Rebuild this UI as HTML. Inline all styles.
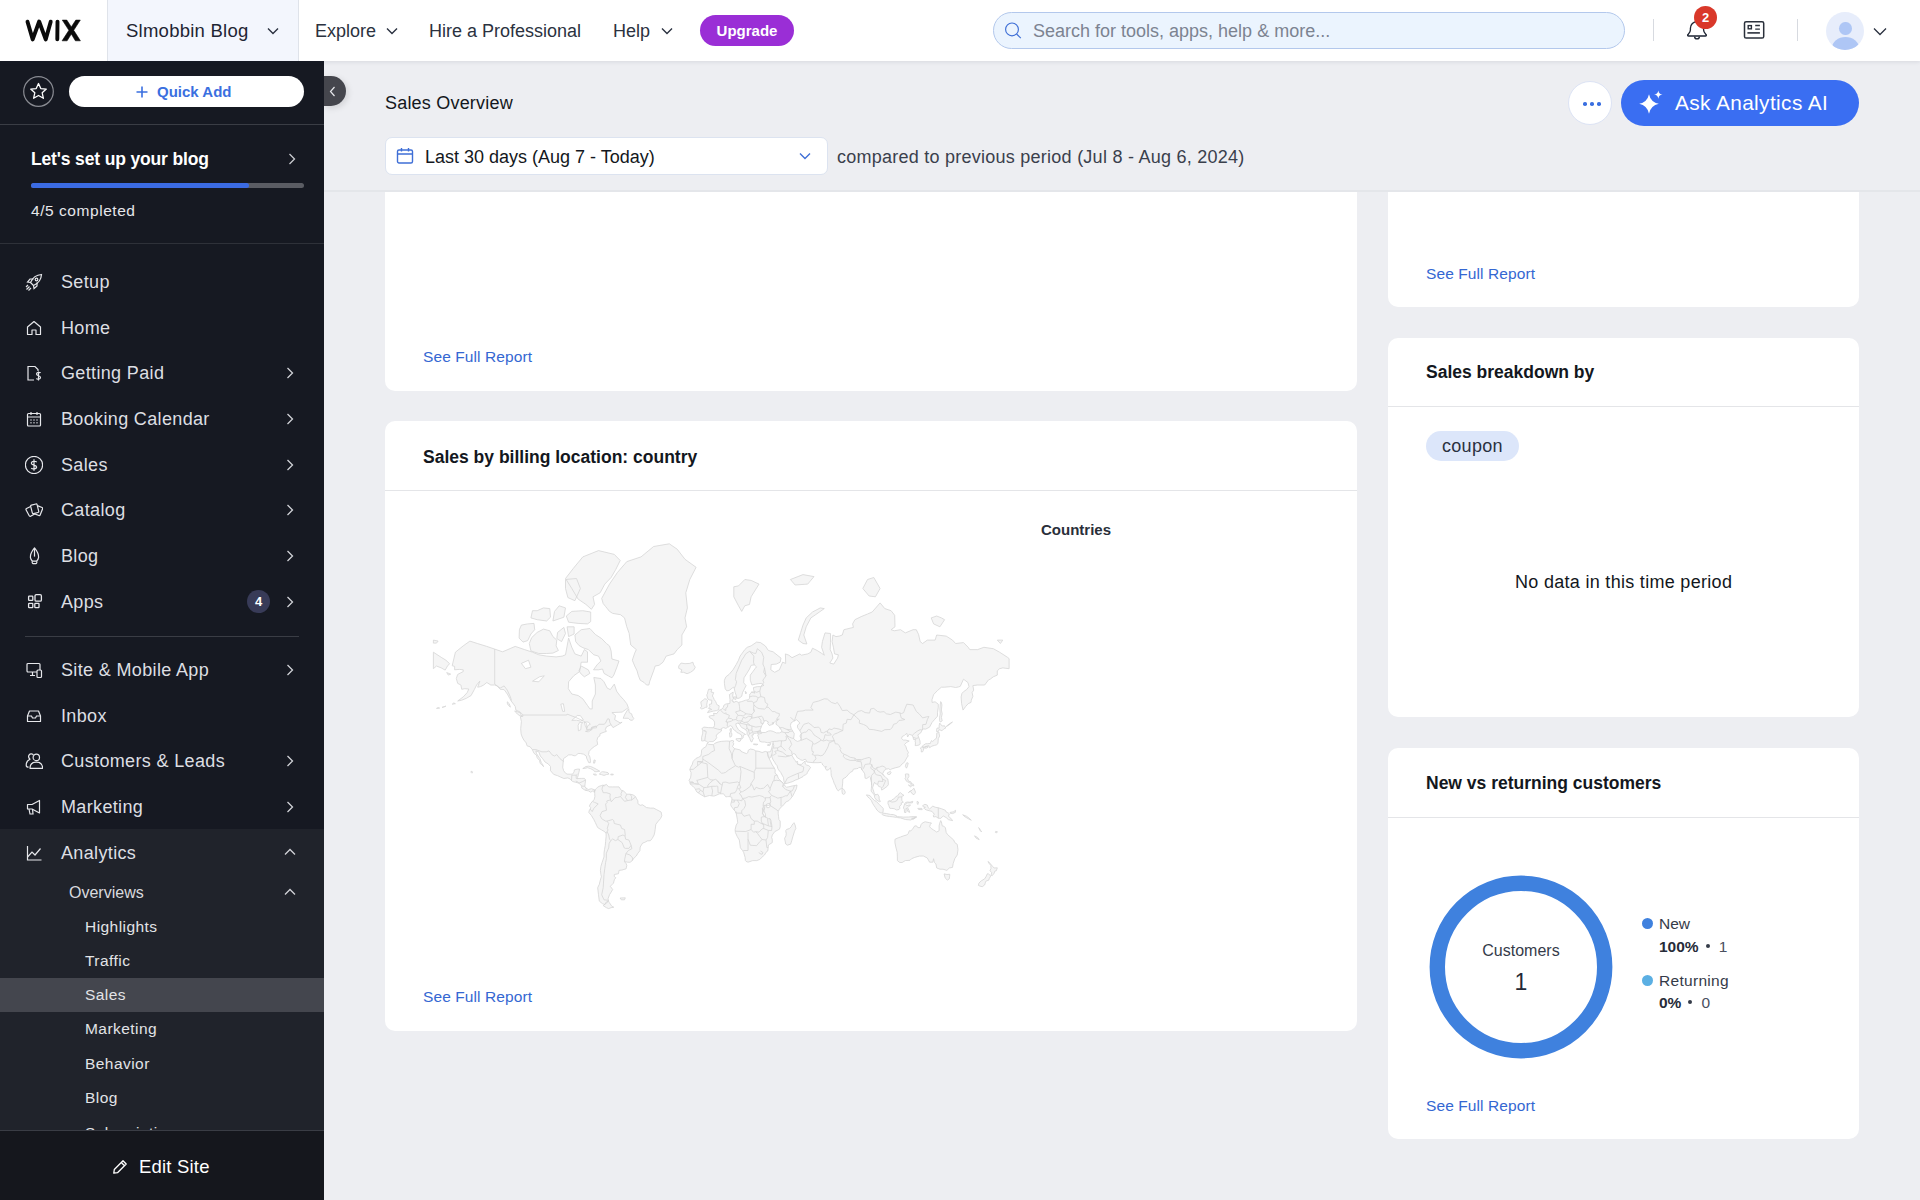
<!DOCTYPE html>
<html><head><meta charset="utf-8">
<style>
*{box-sizing:border-box;margin:0;padding:0}
html,body{width:1920px;height:1200px;overflow:hidden;background:#EDEEF2;font-family:"Liberation Sans",sans-serif;color:#131720}
.abs{position:absolute}
.t{position:absolute;white-space:nowrap;line-height:1}
/* topbar */
#top{position:absolute;left:0;top:0;width:1920px;height:61px;background:#fff;box-shadow:0 1px 4px rgba(20,30,60,.10);z-index:5}
#site{position:absolute;left:107px;top:0;width:192px;height:61px;background:#F3F6FD;border-left:1px solid #DFE3EA;border-right:1px solid #DFE3EA}
.nav{color:#2B3240;font-size:18px}
#upg{position:absolute;left:700px;top:15px;width:94px;height:31px;border-radius:16px;background:#9A2ED6;color:#fff;font-weight:700;font-size:15px;text-align:center;line-height:31px}
#search{position:absolute;left:993px;top:12px;width:632px;height:37px;border-radius:19px;background:#EBF4FE;border:1px solid #B3C8EC}
/* sidebar */
#side{position:absolute;left:0;top:61px;width:324px;height:1139px;background:#161922;z-index:3}
.si{position:absolute;left:61px;font-size:18px;color:#DDDFE3;letter-spacing:.35px}
.chev{position:absolute;left:286px;width:8px;height:12px}
/* main */
.card{position:absolute;background:#fff;border-radius:10px}
.link{color:#3467D2;font-size:15.5px;letter-spacing:.1px}
.ctitle{font-weight:700;font-size:17.5px;color:#131720}
.div{position:absolute;height:1px;background:#E4E5E8}
</style></head>
<body>
<!-- TOP BAR -->
<div id="top">
  <svg class="abs" style="left:0;top:0" width="90" height="61" viewBox="0 0 90 61">
    <path d="M27.5 21.7 L32.7 39.4 L39.15 21.5 L45.7 39.4 L50.7 21.7" stroke="#0B0B0B" stroke-width="3.9" fill="none" stroke-linejoin="round" stroke-linecap="round"/>
    <path d="M57.5 21.6 L57.3 39.2" stroke="#0B0B0B" stroke-width="3.9" stroke-linecap="round"/>
    <path d="M62.3 20.1 L66.8 20.1 L71.3 26.9 L75.8 20.1 L80.3 20.1 L73.7 30.3 L80.4 40.8 L75.4 40.8 L71.3 34 L67.1 40.8 L62.1 40.8 L68.9 30.3 Z" fill="#0B0B0B" stroke="#0B0B0B" stroke-width="0.6" stroke-linejoin="round"/>
  </svg>
  <div id="site">
    <div class="t nav" style="left:18px;top:22px;font-size:18.5px;letter-spacing:.25px;color:#1E2533">Slmobbin Blog</div>
    <svg class="abs" style="left:159px;top:27px" width="12" height="8" viewBox="0 0 12 8"><path d="M1 1.5 L6 6.5 L11 1.5" stroke="#2B3240" stroke-width="1.4" fill="none"/></svg>
  </div>
  <div class="t nav" style="left:315px;top:22px">Explore</div>
  <svg class="abs" style="left:386px;top:27px" width="12" height="8" viewBox="0 0 12 8"><path d="M1 1.5 L6 6.5 L11 1.5" stroke="#2B3240" stroke-width="1.4" fill="none"/></svg>
  <div class="t nav" style="left:429px;top:22px">Hire a Professional</div>
  <div class="t nav" style="left:613px;top:22px">Help</div>
  <svg class="abs" style="left:661px;top:27px" width="12" height="8" viewBox="0 0 12 8"><path d="M1 1.5 L6 6.5 L11 1.5" stroke="#2B3240" stroke-width="1.4" fill="none"/></svg>
  <div id="upg">Upgrade</div>
  <div id="search">
    <svg class="abs" style="left:10px;top:9px" width="18" height="18" viewBox="0 0 18 18"><circle cx="8" cy="7.4" r="6.4" stroke="#3F6FD6" stroke-width="1.15" fill="none"/><path d="M12.6 12 L16.8 16.2" stroke="#3F6FD6" stroke-width="1.15"/></svg>
    <div class="t" style="left:39px;top:9px;font-size:18px;color:#7C8391">Search for tools, apps, help &amp; more...</div>
  </div>
  <div class="abs" style="left:1653px;top:19px;width:1px;height:22px;background:#D7DAE0"></div>
  <svg class="abs" style="left:1686px;top:19px" width="23" height="23" viewBox="0 0 23 23"><path d="M2.6 17 H19.4 C20.4 17 20.7 16.2 20 15.5 C18.8 14.3 17.6 13.3 17.6 11 L17.6 9.2 C17.6 5.3 14.6 2.6 11 2.6 C7.4 2.6 4.4 5.3 4.4 9.2 L4.4 11 C4.4 13.3 3.2 14.3 2 15.5 C1.3 16.2 1.6 17 2.6 17 Z" stroke="#1E2533" stroke-width="1.35" fill="none" stroke-linejoin="round"/><path d="M8.6 17.6 C8.8 20.6 13.2 20.6 13.4 17.6" stroke="#1E2533" stroke-width="1.35" fill="none"/></svg>
  <div class="abs" style="left:1694px;top:6px;width:23px;height:23px;border-radius:50%;background:#D9382A;color:#fff;font-size:13px;font-weight:700;text-align:center;line-height:23px">2</div>
  <svg class="abs" style="left:1743px;top:20px" width="22" height="20" viewBox="0 0 22 20"><rect x="1.5" y="1.7" width="19.2" height="16.4" rx="1.6" stroke="#2A303B" stroke-width="1.5" fill="none"/><rect x="5.2" y="5.6" width="3.2" height="3.2" stroke="#2A303B" stroke-width="1.4" fill="none"/><path d="M12.2 5.5 H16.9 M12.2 9.2 H16.9" stroke="#2A303B" stroke-width="1.3"/><path d="M4.4 12.9 H16.9" stroke="#2A303B" stroke-width="1.6"/></svg>
  <div class="abs" style="left:1797px;top:19px;width:1px;height:22px;background:#D7DAE0"></div>
  <div class="abs" style="left:1826px;top:12px;width:38px;height:38px;border-radius:50%;background:#E7EDFB;overflow:hidden">
    <div class="abs" style="left:13px;top:9.5px;width:12.5px;height:13.5px;border-radius:50%;background:#AEC6F5"></div>
    <div class="abs" style="left:5.5px;top:25px;width:27px;height:22px;border-radius:50%;background:#AEC6F5"></div>
  </div>
  <svg class="abs" style="left:1873px;top:27px" width="14" height="9" viewBox="0 0 14 9"><path d="M1 1.5 L7 7.5 L13 1.5" stroke="#2B3240" stroke-width="1.3" fill="none"/></svg>
</div>

<!-- SIDEBAR -->
<div id="side">
<svg class="abs" style="left:23px;top:15px" width="31" height="31" viewBox="0 0 31 31"><circle cx="15.5" cy="15.5" r="14.8" stroke="#8A8C93" stroke-width="1.2" fill="none"/><path d="M15.5 7.5 L17.8 12.6 L23.3 13.1 L19.2 16.8 L20.4 22.3 L15.5 19.5 L10.6 22.3 L11.8 16.8 L7.7 13.1 L13.2 12.6 Z" stroke="#fff" stroke-width="1.3" fill="none" stroke-linejoin="round"/></svg>
<div class="abs" style="left:69px;top:15px;width:235px;height:31px;border-radius:16px;background:#fff"></div>
<svg class="abs" style="left:136px;top:25px" width="12" height="12" viewBox="0 0 12 12"><path d="M6 0.5 V11.5 M0.5 6 H11.5" stroke="#3A6FE0" stroke-width="1.6"/></svg>
<div class="t" style="left:157px;top:23.3px;font-size:15px;font-weight:700;color:#3A6FE0">Quick Add</div>
<div class="abs" style="left:0;top:63px;width:324px;height:1px;background:#3A3D45"></div>
<div class="t" style="left:31px;top:90.0px;font-size:17.5px;font-weight:700;color:#fff;letter-spacing:-.15px">Let's set up your blog</div>
<svg class="abs" style="left:288px;top:92px" width="8" height="12" viewBox="0 0 8 12"><path d="M1.5 1 L6.5 6 L1.5 11" stroke="#C9CBD0" stroke-width="1.3" fill="none"/></svg>
<div class="abs" style="left:31px;top:122px;width:273px;height:5px;border-radius:3px;background:#5A5C63"><div style="width:218px;height:5px;border-radius:3px;background:#3B6BE3"></div></div>
<div class="t" style="left:31px;top:141.9px;font-size:15.5px;color:#E6E7EB;letter-spacing:.55px">4/5 completed</div>
<div class="abs" style="left:0;top:182px;width:324px;height:1px;background:#2E3139"></div>
<svg class="abs" style="left:25px;top:212.0px" width="18" height="18" viewBox="0 0 18 18" fill="none" stroke="#E6E7EB" stroke-width="1.2"><path d="M16.5 1.5 C11 1.8 7.5 5 5.5 9.5 L8.5 12.5 C13 10.5 16.2 7 16.5 1.5 Z" /><circle cx="11.5" cy="6.5" r="1.3"/><path d="M5.5 9.5 L2.5 9 L5 6 L8.5 6"/><path d="M8.5 12.5 L9 15.5 L12 13 L12 9.5"/><path d="M4.5 13.5 L1.5 16.5 M6 15 L3.5 17.5 M3 12 L1 14"/></svg>
<div class="t si" style="top:212.3px">Setup</div>
<svg class="abs" style="left:25px;top:258.0px" width="18" height="18" viewBox="0 0 18 18" fill="none" stroke="#E6E7EB" stroke-width="1.2"><path d="M2.5 8 L9 2.5 L15.5 8 L15.5 15.5 L11 15.5 L11 11 L7 11 L7 15.5 L2.5 15.5 Z" stroke-linejoin="round"/></svg>
<div class="t si" style="top:258.3px">Home</div>
<svg class="abs" style="left:25px;top:303.0px" width="18" height="18" viewBox="0 0 18 18" fill="none" stroke="#E6E7EB" stroke-width="1.2"><path d="M9 16 L3 16 L3 2.5 L10 2.5 L13 5.5 L13 7"/><path d="M15.5 9 C15 8 11.5 8 11.5 10 C11.5 12 15.5 11.5 15.5 13.5 C15.5 15.5 12 15.5 11.3 14.5 M13.5 7.5 L13.5 16.5"/></svg>
<div class="t si" style="top:303.3px">Getting Paid</div>
<svg class="chev" style="top:306.0px" viewBox="0 0 8 12"><path d="M1.5 1 L6.5 6 L1.5 11" stroke="#D0D2D7" stroke-width="1.3" fill="none"/></svg>
<svg class="abs" style="left:25px;top:349.0px" width="18" height="18" viewBox="0 0 18 18" fill="none" stroke="#E6E7EB" stroke-width="1.2"><rect x="2.5" y="3.5" width="13" height="12.5" rx="1"/><path d="M2.5 7 H15.5 M6 2 V5 M12 2 V5"/><path d="M5.5 10 h1 M8.5 10 h1 M11.5 10 h1 M5.5 12.8 h1 M8.5 12.8 h1 M11.5 12.8 h1" stroke-width="1.5"/></svg>
<div class="t si" style="top:349.3px">Booking Calendar</div>
<svg class="chev" style="top:352.0px" viewBox="0 0 8 12"><path d="M1.5 1 L6.5 6 L1.5 11" stroke="#D0D2D7" stroke-width="1.3" fill="none"/></svg>
<svg class="abs" style="left:25px;top:395.0px" width="18" height="18" viewBox="0 0 18 18" fill="none" stroke="#E6E7EB" stroke-width="1.2"><circle cx="9" cy="9" r="8.6"/><path d="M11.6 6.2 C11 4.8 6.4 4.8 6.4 7.2 C6.4 9.5 11.6 8.7 11.6 11.1 C11.6 13.4 7 13.4 6.3 11.9 M9 3.3 V14.7"/></svg>
<div class="t si" style="top:395.3px">Sales</div>
<svg class="chev" style="top:398.0px" viewBox="0 0 8 12"><path d="M1.5 1 L6.5 6 L1.5 11" stroke="#D0D2D7" stroke-width="1.3" fill="none"/></svg>
<svg class="abs" style="left:25px;top:440.0px" width="18" height="18" viewBox="0 0 18 18" fill="none" stroke="#E6E7EB" stroke-width="1.2"><g stroke-linejoin="round" fill="#161922"><rect x="2.3" y="6" width="6.6" height="8.6" rx="1" transform="rotate(-28 5.6 10.3)"/><rect x="10.2" y="5.4" width="6.4" height="8.6" rx="1" transform="rotate(22 13.4 9.7)"/><rect x="6.4" y="3.4" width="6.6" height="8.8" rx="1" transform="rotate(-14 9.7 7.8)"/></g></svg>
<div class="t si" style="top:440.3px">Catalog</div>
<svg class="chev" style="top:443.0px" viewBox="0 0 8 12"><path d="M1.5 1 L6.5 6 L1.5 11" stroke="#D0D2D7" stroke-width="1.3" fill="none"/></svg>
<svg class="abs" style="left:25px;top:486.0px" width="18" height="18" viewBox="0 0 18 18" fill="none" stroke="#E6E7EB" stroke-width="1.2"><path d="M9.5 0.9 C12 4 13.9 7.3 13.6 10.4 C13.4 12.1 12.4 13.4 11.6 14.2 L7.4 14.2 C6.6 13.4 5.6 12.1 5.4 10.4 C5.1 7.3 7 4 9.5 0.9 Z" stroke-linejoin="round"/><path d="M9.5 1.8 V9.6"/><path d="M7.4 14.2 C6.9 15 7.1 16.4 8.1 16.6 H10.9 C11.9 16.4 12.1 15 11.6 14.2"/></svg>
<div class="t si" style="top:486.3px">Blog</div>
<svg class="chev" style="top:489.0px" viewBox="0 0 8 12"><path d="M1.5 1 L6.5 6 L1.5 11" stroke="#D0D2D7" stroke-width="1.3" fill="none"/></svg>
<svg class="abs" style="left:25px;top:532.0px" width="18" height="18" viewBox="0 0 18 18" fill="none" stroke="#E6E7EB" stroke-width="1.2"><g stroke-width="1.3"><rect x="3.6" y="3.2" width="4.2" height="4.2" rx=".6"/><rect x="3.6" y="10.4" width="4.2" height="4.2" rx=".6"/><rect x="9.8" y="10.4" width="4.2" height="4.2" rx=".6"/><rect x="10" y="1.6" width="6.4" height="6.6" rx="1.3"/></g></svg>
<div class="t si" style="top:532.3px">Apps</div>
<svg class="chev" style="top:535.0px" viewBox="0 0 8 12"><path d="M1.5 1 L6.5 6 L1.5 11" stroke="#D0D2D7" stroke-width="1.3" fill="none"/></svg>
<svg class="abs" style="left:25px;top:600.0px" width="18" height="18" viewBox="0 0 18 18" fill="none" stroke="#E6E7EB" stroke-width="1.2"><rect x="2" y="2.5" width="13" height="8.5" rx="1"/><path d="M5 14.5 H10 M7.5 11 V14.5"/><rect x="12" y="9" width="4.5" height="7.5" rx="1" fill="#161922"/></svg>
<div class="t si" style="top:600.3px">Site &amp; Mobile App</div>
<svg class="chev" style="top:603.0px" viewBox="0 0 8 12"><path d="M1.5 1 L6.5 6 L1.5 11" stroke="#D0D2D7" stroke-width="1.3" fill="none"/></svg>
<svg class="abs" style="left:25px;top:645.5px" width="18" height="18" viewBox="0 0 18 18" fill="none" stroke="#E6E7EB" stroke-width="1.2"><path d="M2.5 9 L4.5 4 L13.5 4 L15.5 9 L15.5 14.5 L2.5 14.5 Z" stroke-linejoin="round"/><path d="M2.5 9 L6.5 9 L7.5 11 L10.5 11 L11.5 9 L15.5 9"/></svg>
<div class="t si" style="top:645.8px">Inbox</div>
<svg class="abs" style="left:25px;top:691.0px" width="18" height="18" viewBox="0 0 18 18" fill="none" stroke="#E6E7EB" stroke-width="1.2"><g stroke-linejoin="round"><circle cx="11.3" cy="5.4" r="3.2"/><path d="M5 16.3 C5 12.5 7.5 10.2 11.3 10.2 C15.1 10.2 17.6 12.5 17.6 16.3 Z"/><path d="M8.4 3.2 C7.8 1.6 5.2 1.3 4.2 2.8 C3.4 4 3.6 6 5 7.2 C2.6 8.2 1.2 10.5 1.2 13.2 C1.2 14.4 2 15.2 3.6 15.2"/></g></svg>
<div class="t si" style="top:691.3px">Customers &amp; Leads</div>
<svg class="chev" style="top:694.0px" viewBox="0 0 8 12"><path d="M1.5 1 L6.5 6 L1.5 11" stroke="#D0D2D7" stroke-width="1.3" fill="none"/></svg>
<svg class="abs" style="left:25px;top:736.6px" width="18" height="18" viewBox="0 0 18 18" fill="none" stroke="#E6E7EB" stroke-width="1.2"><path d="M2.5 6.5 L7 6.5 L14.5 2.5 L14.5 15 L7 11 L2.5 11 Z" stroke-linejoin="round"/><path d="M4 11 L5 16 L8 16 L7.5 11"/></svg>
<div class="t si" style="top:736.9px">Marketing</div>
<svg class="chev" style="top:739.6px" viewBox="0 0 8 12"><path d="M1.5 1 L6.5 6 L1.5 11" stroke="#D0D2D7" stroke-width="1.3" fill="none"/></svg>
<div class="abs" style="left:247px;top:528.5px;width:23px;height:23px;border-radius:50%;background:#383B58;color:#fff;font-size:13px;font-weight:700;text-align:center;line-height:23px">4</div>
<div class="abs" style="left:25px;top:575px;width:274px;height:1px;background:#3A3D45"></div>
<div class="abs" style="left:0;top:768px;width:324px;height:301px;background:#20232B"></div>
<svg class="abs" style="left:25px;top:782.7px" width="18" height="18" viewBox="0 0 18 18" fill="none" stroke="#E6E7EB" stroke-width="1.2"><path d="M2.5 2 V16 H16.5"/><path d="M2.5 13 L7 8 L10 11 L15.5 4.5"/></svg>
<div class="t si" style="top:783.0px">Analytics</div>
<svg class="chev" style="left:283.5px;top:786.7px;width:12px;height:8px" viewBox="0 0 12 8"><path d="M1 6.5 L6 1.5 L11 6.5" stroke="#D0D2D7" stroke-width="1.3" fill="none"/></svg>
<div class="t" style="left:69px;top:823.8px;font-size:16px;color:#D9DADF">Overviews</div>
<svg class="chev" style="left:283.5px;top:826.5px;width:12px;height:8px" viewBox="0 0 12 8"><path d="M1 6.5 L6 1.5 L11 6.5" stroke="#D0D2D7" stroke-width="1.3" fill="none"/></svg>
<div class="abs" style="left:0;top:917px;width:324px;height:34px;background:#44464E"></div>
<div class="t" style="left:85px;top:857.5px;font-size:15.5px;color:#E2E3E7;letter-spacing:.45px">Highlights</div>
<div class="t" style="left:85px;top:891.5px;font-size:15.5px;color:#E2E3E7;letter-spacing:.45px">Traffic</div>
<div class="t" style="left:85px;top:925.5px;font-size:15.5px;color:#E2E3E7;letter-spacing:.45px">Sales</div>
<div class="t" style="left:85px;top:960.0px;font-size:15.5px;color:#E2E3E7;letter-spacing:.45px">Marketing</div>
<div class="t" style="left:85px;top:994.5px;font-size:15.5px;color:#E2E3E7;letter-spacing:.45px">Behavior</div>
<div class="t" style="left:85px;top:1028.5px;font-size:15.5px;color:#E2E3E7;letter-spacing:.45px">Blog</div>
<div class="t" style="left:85px;top:1064.0px;font-size:15.5px;color:#E2E3E7;letter-spacing:.45px">Subscriptions</div>
<div class="abs" style="left:0;top:1069px;width:324px;height:70px;background:#15171D;border-top:1px solid #3A3D45"></div>
<svg class="abs" style="left:112px;top:1097.5px" width="16" height="16" viewBox="0 0 16 16" fill="none" stroke="#fff" stroke-width="1.3"><path d="M11 1.8 L14.2 5 L5.5 13.7 L1.8 14.2 L2.3 10.5 Z M9.3 3.5 L12.5 6.7" stroke-linejoin="round"/></svg>
<div class="t" style="left:139px;top:1096.6px;font-size:18.5px;color:#fff;letter-spacing:.2px">Edit Site</div>
</div>

<!-- MAIN -->
<div id="main">
<div class="abs" style="left:324px;top:61px;width:1596px;height:130px;background:#EDEEF2;z-index:1"></div>
<div style="position:absolute;left:0;top:0;z-index:2">
<div class="abs" style="left:324px;top:76px;width:22px;height:30px;border-radius:0 15px 15px 0;background:#45464D;box-shadow:2px 2px 6px rgba(0,0,0,.12);z-index:4"></div>
<svg class="abs" style="left:329px;top:86px;z-index:4" width="7" height="11" viewBox="0 0 7 11"><path d="M5.5 1 L1.5 5.5 L5.5 10" stroke="#E6E7EB" stroke-width="1.2" fill="none"/></svg>
<div class="abs" style="left:324px;top:190px;width:1596px;height:2px;background:#E4E6EA;z-index:2"></div>
<div class="t" style="left:385px;top:94.4px;font-size:18px;color:#131720;letter-spacing:.2px">Sales Overview</div>
<div class="abs" style="left:385px;top:137px;width:443px;height:38px;border-radius:7px;background:#fff;border:1px solid #DCE3F0"></div>
<svg class="abs" style="left:396px;top:147px" width="18" height="18" viewBox="0 0 18 18" fill="none" stroke="#3F6FD6" stroke-width="1.4"><rect x="1.5" y="3" width="15" height="13" rx="1.5"/><path d="M1.5 7 H16.5 M5.5 1 V4.5 M12.5 1 V4.5"/></svg>
<div class="t" style="left:425px;top:147.8px;font-size:18px;color:#131720">Last 30 days (Aug 7 - Today)</div>
<svg class="abs" style="left:799px;top:152px" width="12" height="9" viewBox="0 0 12 9"><path d="M1 1.5 L6 6.5 L11 1.5" stroke="#3F6FD6" stroke-width="1.4" fill="none"/></svg>
<div class="t" style="left:837px;top:147.8px;font-size:18px;color:#3A404C;letter-spacing:.25px">compared to previous period (Jul 8 - Aug 6, 2024)</div>
<div class="abs" style="left:1568px;top:81px;width:44px;height:44px;border-radius:50%;background:#fff;border:1px solid #DCE3F4"></div>
<div class="abs" style="left:1583px;top:102px;width:3.5px;height:3.5px;border-radius:50%;background:#3A6FE0"></div>
<div class="abs" style="left:1590px;top:102px;width:3.5px;height:3.5px;border-radius:50%;background:#3A6FE0"></div>
<div class="abs" style="left:1597px;top:102px;width:3.5px;height:3.5px;border-radius:50%;background:#3A6FE0"></div>
<div class="abs" style="left:1621px;top:80px;width:238px;height:46px;border-radius:23px;background:#3A6EF2"></div>
<svg class="abs" style="left:1638px;top:90px" width="26" height="26" viewBox="0 0 26 26" fill="#fff"><path d="M11 4.2 Q12.7 12.1 20.8 13.8 Q12.7 15.5 11 23.8 Q9.3 15.5 1.2 13.8 Q9.3 12.1 11 4.2 Z"/><path d="M20.3 0.5 C20.8 3.2 21.6 4.1 24.5 4.6 C21.6 5.1 20.8 6 20.3 8.8 C19.8 6 19 5.1 16.1 4.6 C19 4.1 19.8 3.2 20.3 0.5 Z"/></svg>
<div class="t" style="left:1675px;top:93px;font-size:20.8px;color:#fff;letter-spacing:.4px">Ask Analytics AI</div>
<div class="card" style="left:385px;top:191px;width:972px;height:200px;border-radius:0 0 10px 10px"></div>
<div class="card" style="left:385px;top:421px;width:972px;height:610px"></div>
<div class="card" style="left:1388px;top:191px;width:471px;height:116px;border-radius:0 0 10px 10px"></div>
<div class="card" style="left:1388px;top:338px;width:471px;height:379px"></div>
<div class="card" style="left:1388px;top:748px;width:471px;height:391px"></div>
<div class="t link" style="left:423px;top:349.4px">See Full Report</div>
<div class="t ctitle" style="left:423px;top:448.9px">Sales by billing location: country</div>
<div class="div" style="left:385px;top:490px;width:972px"></div>
<div class="t" style="left:1041px;top:521.8px;font-size:15px;font-weight:700;color:#2A2F3A">Countries</div>
<!--MAPSTART--><svg class="abs" style="left:0;top:0" width="1920" height="1200" viewBox="0 0 1920 1200"><path d="M454.6 666.4 L454.6 669.8 L459.3 669.4 L463.2 669.8 L463.2 671.6 L457.7 674.4 L456.3 678.5 L457.7 683.4 L460.9 685.0 L461.7 689.3 L464.8 688.7 L468.8 689.0 L467.2 692.6 L463.2 696.9 L457.7 701.0 L461.7 700.2 L466.4 698.3 L471.1 695.5 L474.3 689.6 L476.6 685.0 L479.8 681.2 L477.7 687.2 L480.6 686.6 L483.7 685.0 L486.8 682.5 L490.8 685.0 L494.7 685.0 L497.1 685.9 L500.2 689.3 L504.1 689.6 L507.3 694.0 L509.7 698.3 L511.2 701.0 L515.2 706.3 L515.9 710.1 L519.9 711.9 L522.5 714.3 L523.0 716.2 L520.3 716.5 L521.4 721.6 L520.7 728.6 L521.1 733.9 L522.2 737.0 L523.8 740.0 L526.2 742.9 L527.0 745.8 L530.1 746.8 L532.3 749.6 L534.0 753.3 L536.4 755.1 L537.2 757.8 L539.5 760.4 L540.2 763.4 L541.9 764.8 L543.6 766.7 L542.8 764.8 L541.1 762.2 L540.0 758.7 L538.0 756.0 L536.4 753.3 L535.9 750.9 L538.8 751.8 L540.3 756.0 L542.7 758.7 L545.0 762.0 L548.2 763.9 L550.5 766.5 L550.5 770.7 L553.7 774.4 L557.6 775.7 L560.8 777.2 L563.9 778.5 L567.9 777.9 L570.2 779.0 L572.6 781.5 L575.7 782.3 L578.9 783.1 L581.7 786.0 L581.7 788.0 L585.2 790.3 L588.3 790.8 L590.7 792.2 L593.0 790.8 L594.6 791.9 L594.9 790.0 L594.1 789.6 L591.4 788.7 L588.3 789.5 L585.9 788.0 L584.8 786.3 L585.2 783.1 L585.6 780.0 L584.4 778.4 L581.2 778.4 L577.3 778.5 L577.6 777.4 L578.4 774.6 L578.9 772.4 L579.6 769.1 L577.3 769.1 L574.3 769.9 L574.1 771.9 L572.6 774.1 L570.2 774.2 L567.1 774.1 L565.5 773.2 L563.6 770.6 L562.7 767.4 L563.1 763.1 L563.6 758.5 L566.3 756.7 L568.6 754.9 L571.8 754.9 L574.1 755.8 L575.7 755.6 L578.1 753.5 L580.4 753.5 L583.6 754.2 L586.3 756.0 L586.6 758.1 L587.5 760.1 L588.8 762.7 L590.3 762.7 L590.5 760.4 L589.9 756.9 L588.6 754.6 L589.1 751.4 L592.2 748.1 L594.6 746.4 L597.7 744.5 L597.0 740.6 L597.7 737.4 L599.8 736.0 L600.1 733.7 L604.0 732.2 L606.4 731.4 L605.4 729.5 L606.4 726.9 L611.1 724.7 L613.0 727.6 L617.4 725.1 L622.1 722.2 L620.2 722.9 L614.7 719.7 L615.5 715.5 L611.9 712.6 L622.1 712.1 L628.4 707.6 L626.8 703.7 L623.7 699.7 L619.8 695.5 L616.6 691.1 L614.3 684.1 L610.3 689.6 L607.2 688.1 L604.0 681.8 L600.9 678.5 L593.8 677.5 L595.4 685.0 L595.4 694.0 L592.2 701.0 L592.2 708.9 L589.9 708.9 L587.5 705.5 L582.8 698.8 L578.1 695.5 L571.8 694.0 L568.3 688.7 L568.6 681.8 L573.7 675.8 L579.6 671.6 L581.2 662.2 L587.5 662.2 L587.5 651.8 L584.4 649.6 L581.2 656.1 L574.9 653.9 L571.8 647.3 L568.6 638.1 L565.5 654.8 L562.3 656.1 L556.1 656.9 L546.6 656.1 L538.8 654.8 L532.5 652.2 L524.6 649.6 L515.2 646.4 L502.6 651.8 L494.7 649.1 L486.8 646.4 L477.4 643.5 L469.9 641.1 L463.2 645.9 L455.4 652.2 L452.2 665.7Z M594.6 791.9 L594.7 793.5 L594.9 796.6 L594.1 799.6 L592.2 801.7 L590.5 803.7 L589.4 806.1 L590.7 807.6 L590.2 809.1 L589.4 810.0 L588.8 812.4 L591.4 815.5 L593.8 819.5 L595.4 822.7 L596.5 825.1 L597.7 827.6 L601.7 830.0 L604.0 831.3 L606.1 833.0 L606.1 836.7 L605.6 841.7 L605.3 845.2 L604.5 849.6 L604.0 853.2 L604.0 856.9 L602.1 862.5 L600.9 866.4 L600.4 870.4 L600.9 874.5 L601.4 876.6 L600.1 880.9 L599.3 884.3 L597.7 887.7 L598.5 894.8 L599.3 901.1 L602.5 903.7 L604.8 904.5 L606.4 901.9 L608.7 901.1 L608.0 898.8 L609.5 894.8 L612.7 889.5 L610.3 886.3 L613.5 883.1 L614.3 879.8 L615.8 877.7 L614.3 876.6 L614.3 874.5 L618.5 873.7 L619.0 870.4 L622.1 870.0 L626.1 868.8 L626.8 865.4 L626.1 863.5 L624.5 861.6 L627.6 862.2 L630.1 862.3 L632.3 860.6 L634.2 857.8 L636.3 856.0 L637.9 853.2 L639.9 850.7 L640.2 847.0 L642.6 843.1 L644.9 842.3 L647.3 840.9 L650.4 840.7 L652.3 838.3 L654.1 835.0 L654.8 832.0 L655.2 829.2 L655.8 824.3 L658.3 821.1 L660.7 818.4 L661.8 815.5 L661.1 812.0 L656.7 809.7 L653.6 808.1 L650.4 808.1 L646.5 807.6 L642.6 804.8 L640.2 805.3 L637.9 803.7 L637.9 800.9 L636.3 798.2 L635.5 796.6 L633.1 794.9 L630.0 794.2 L626.8 794.2 L623.7 791.1 L621.3 790.3 L620.5 789.2 L619.0 786.9 L615.8 786.9 L612.7 786.9 L608.7 786.9 L606.4 784.4 L604.8 785.2 L603.9 786.4 L603.2 785.0 L601.7 785.5 L599.3 786.3 L597.7 787.1 L596.2 788.7 L594.9 790.0Z M605.6 903.7 L603.2 905.6 L606.4 907.7 L608.7 908.6 L611.1 907.7 L613.8 907.2 L611.9 906.4 L609.2 902.4 L608.6 901.3Z M603.2 603.6 L605.6 606.5 L609.5 611.4 L612.7 613.4 L620.5 614.7 L624.5 617.9 L626.8 626.8 L629.2 633.5 L630.0 640.1 L630.8 645.0 L636.3 649.6 L634.7 653.1 L632.3 660.2 L634.7 666.0 L637.1 670.9 L638.2 675.1 L640.2 680.2 L644.1 682.5 L646.5 685.0 L648.9 685.0 L649.6 681.8 L652.0 675.1 L653.6 670.9 L655.2 666.0 L659.1 665.3 L663.0 662.2 L666.2 656.1 L674.0 653.9 L677.2 649.6 L681.9 645.0 L681.9 635.0 L686.6 626.8 L685.0 617.9 L687.4 607.9 L685.8 592.8 L689.8 579.5 L696.1 567.3 L685.0 559.3 L677.2 549.2 L669.3 543.8 L653.6 546.5 L641.0 556.9 L626.8 561.6 L617.4 572.5 L609.5 584.1 L601.7 598.4Z M581.2 629.7 L574.9 635.0 L575.7 641.6 L578.9 645.4 L582.8 647.7 L588.3 649.6 L593.8 654.8 L598.5 656.1 L600.9 661.0 L597.0 664.9 L593.5 669.8 L598.5 669.8 L602.5 669.0 L604.0 673.4 L608.7 676.1 L611.9 677.8 L613.8 675.1 L616.6 667.9 L619.0 661.0 L611.9 659.0 L611.1 650.9 L609.5 645.9 L606.4 643.5 L601.7 638.6 L595.4 634.5 L589.9 628.5Z M620.2 560.5 L614.3 554.4 L598.5 550.6 L582.8 556.9 L573.4 568.3 L565.5 578.5 L571.8 588.5 L578.1 599.1 L585.9 604.4 L591.4 609.3 L594.6 604.4 L593.0 596.8 L600.1 592.8 L604.8 584.1 L611.1 577.5 L615.8 569.4Z M590.7 612.0 L582.8 610.7 L571.8 611.4 L566.3 616.0 L568.6 622.2 L578.1 623.4 L587.5 623.9 L590.7 621.6Z M556.1 645.9 L556.8 640.1 L552.9 636.6 L549.8 630.8 L543.5 629.1 L537.2 632.4 L531.7 637.6 L529.3 643.5 L530.9 650.9 L538.8 653.5 L546.6 653.5 L552.9 653.1 L558.4 650.5Z M523.0 642.1 L527.7 640.6 L530.9 634.0 L534.7 629.7 L534.0 623.4 L527.7 623.9 L521.4 625.1 L519.4 629.7 L519.1 638.1Z M530.9 617.9 L537.2 619.7 L546.6 621.0 L550.5 617.2 L549.8 608.6 L543.5 607.9 L537.2 610.7 L532.5 610.7Z M552.9 621.0 L563.9 617.2 L565.5 607.9 L559.2 605.8 L554.5 611.4Z M565.5 588.5 L567.9 597.6 L574.9 600.7 L580.4 588.5 L576.5 578.5 L565.5 579.5Z M556.8 638.6 L561.6 641.6 L565.5 633.5 L563.9 627.4 L557.6 632.4Z M568.6 636.6 L574.1 634.0 L574.1 626.8 L567.1 626.8Z M581.2 674.1 L584.4 676.8 L589.9 673.4 L588.3 669.8 L581.2 666.0 L578.9 670.9Z M624.5 718.3 L628.4 718.3 L630.0 720.0 L632.3 720.4 L633.8 718.6 L632.2 716.0 L631.6 713.8 L629.2 712.6 L628.7 708.6 L626.8 711.1 L624.5 715.0 L623.2 718.3Z M584.4 768.5 L587.5 767.7 L590.7 768.7 L593.8 770.4 L594.6 771.7 L597.0 771.7 L599.8 771.2 L597.0 769.6 L593.8 767.9 L590.7 766.5 L588.3 766.2 L585.9 766.5 L582.8 768.5Z M601.7 774.7 L604.0 775.4 L606.4 774.6 L608.9 774.1 L608.0 772.7 L605.6 772.1 L602.5 771.7 L601.7 771.9 L599.3 774.1Z M594.9 775.2 L596.6 774.9 L595.4 774.1 L593.3 774.2Z M610.8 774.9 L613.2 774.9 L613.3 774.2 L610.8 774.1Z M515.9 712.6 L519.1 715.3 L522.2 716.5 L519.9 712.6 L514.7 710.9Z M507.3 703.2 L508.1 705.0 L510.4 707.1 L509.3 703.7 L507.3 701.8Z M702.5 741.0 L704.7 740.6 L706.6 741.4 L708.0 742.7 L709.4 741.6 L713.0 741.6 L715.4 739.8 L716.8 737.4 L716.0 736.0 L717.6 733.7 L719.6 732.5 L721.5 731.0 L721.2 728.6 L723.6 727.6 L725.9 728.4 L727.5 727.3 L728.3 726.9 L730.3 725.6 L732.2 726.7 L733.0 728.9 L734.1 729.9 L736.2 731.4 L736.9 732.5 L738.8 733.3 L739.8 733.9 L741.4 734.9 L742.0 737.2 L741.0 738.6 L741.7 739.2 L742.6 738.2 L743.4 737.2 L743.2 736.2 L744.5 734.3 L745.6 734.5 L743.6 733.3 L741.7 732.0 L740.1 731.0 L738.4 729.7 L736.2 726.0 L735.8 723.8 L737.9 723.1 L739.3 723.8 L740.9 726.5 L741.7 727.6 L744.0 728.6 L745.6 729.9 L747.0 731.2 L747.2 731.8 L747.0 734.3 L748.3 735.8 L749.8 738.4 L750.3 740.0 L750.8 741.4 L751.9 742.0 L752.5 740.0 L753.5 738.4 L752.4 737.0 L751.9 735.1 L753.6 734.9 L752.7 733.9 L754.3 733.5 L756.6 733.1 L758.2 733.3 L760.9 732.2 L762.4 732.5 L762.1 733.1 L759.4 733.9 L758.2 734.3 L757.7 736.0 L758.7 737.0 L758.2 738.4 L759.4 739.4 L759.8 741.4 L762.1 742.0 L764.5 742.0 L767.6 742.7 L770.0 742.5 L771.6 741.8 L773.1 741.6 L773.0 743.1 L772.3 745.8 L771.6 748.7 L770.9 750.5 L770.3 751.8 L767.3 752.0 L767.8 754.4 L769.5 758.5 L770.8 757.3 L771.4 755.1 L772.3 757.8 L773.1 759.9 L774.7 762.2 L775.5 763.9 L777.1 765.7 L777.8 768.4 L778.6 769.9 L780.7 772.4 L782.1 775.1 L783.4 777.4 L783.7 778.9 L783.8 780.6 L784.6 783.6 L784.9 783.7 L787.3 783.2 L790.4 782.3 L792.8 781.5 L795.1 780.2 L798.6 778.9 L803.0 776.6 L803.6 775.6 L805.4 774.9 L807.3 773.4 L807.4 772.4 L809.0 769.9 L810.6 767.4 L808.8 765.7 L806.6 765.0 L805.2 763.9 L805.1 761.0 L803.8 762.2 L801.4 764.4 L799.1 764.4 L797.5 764.1 L797.7 762.7 L797.2 761.1 L796.4 762.4 L795.1 760.4 L794.4 759.6 L792.8 756.9 L792.0 755.5 L792.0 755.1 L793.3 753.6 L795.1 754.0 L796.3 756.0 L797.5 758.0 L799.1 758.7 L800.7 759.9 L802.7 760.4 L805.1 759.2 L805.8 759.6 L806.9 762.0 L810.1 762.4 L813.2 762.7 L818.0 762.7 L821.1 762.4 L822.2 763.6 L822.7 765.0 L824.7 766.8 L826.6 766.7 L825.0 767.7 L826.6 770.2 L828.5 769.9 L830.5 767.7 L830.7 769.4 L831.0 770.7 L831.0 772.7 L831.3 775.7 L832.1 777.7 L833.2 780.3 L834.2 783.4 L835.1 785.0 L836.0 787.4 L837.0 789.6 L838.4 790.9 L839.2 789.8 L840.8 789.0 L842.2 787.4 L842.7 783.1 L842.8 779.0 L846.0 777.2 L848.6 774.2 L850.2 772.4 L852.6 771.2 L853.4 769.1 L856.5 768.7 L858.1 768.4 L858.9 767.4 L860.9 767.5 L862.0 769.9 L863.6 771.9 L864.7 773.9 L865.1 778.2 L866.7 778.5 L869.4 776.6 L870.2 777.4 L871.4 782.3 L871.6 785.5 L871.3 788.7 L871.1 791.1 L874.3 795.0 L874.6 797.4 L876.2 799.8 L879.3 801.7 L880.4 801.5 L879.1 799.0 L879.1 796.6 L877.7 794.2 L875.7 794.9 L874.3 793.5 L873.0 789.2 L872.5 787.9 L873.8 783.9 L874.6 782.3 L875.2 783.6 L877.7 784.4 L878.5 786.3 L880.6 787.1 L881.7 787.9 L881.4 788.2 L881.7 790.1 L884.0 788.7 L887.2 786.3 L888.3 784.7 L888.3 782.3 L887.8 779.0 L885.6 777.4 L884.0 775.7 L882.5 773.9 L882.9 773.2 L884.3 770.4 L886.4 769.1 L888.7 768.7 L890.3 769.9 L891.1 769.1 L895.0 767.9 L895.8 767.7 L899.8 766.7 L902.1 763.9 L904.5 762.2 L904.9 761.3 L906.8 757.8 L908.2 756.0 L907.6 754.2 L908.4 752.4 L906.8 749.6 L906.0 746.8 L904.5 744.5 L906.8 742.3 L909.2 741.0 L905.3 740.0 L903.4 740.2 L901.6 738.4 L902.1 736.6 L904.5 735.3 L906.8 733.3 L907.6 737.0 L909.2 734.3 L912.3 735.3 L913.1 737.4 L913.6 739.6 L915.8 739.4 L915.0 741.0 L915.5 742.9 L915.2 745.6 L916.3 745.6 L919.4 744.9 L920.2 743.9 L920.0 741.0 L917.8 734.9 L920.7 732.9 L922.1 730.1 L923.3 728.9 L925.7 729.1 L929.6 727.1 L932.0 722.5 L934.4 719.7 L937.5 716.2 L937.5 712.6 L938.3 707.1 L938.3 704.2 L935.1 701.8 L932.0 702.4 L932.0 699.7 L933.6 694.6 L937.5 690.5 L941.4 687.2 L944.6 687.2 L950.9 686.6 L955.6 687.5 L958.7 686.9 L960.3 686.3 L963.5 679.2 L967.9 682.5 L969.0 686.6 L966.6 689.6 L963.5 691.7 L961.9 693.5 L961.1 696.9 L961.6 703.7 L963.0 710.1 L965.8 706.3 L968.2 703.7 L971.0 702.4 L971.3 700.2 L972.9 696.3 L972.1 692.6 L973.7 690.2 L972.9 685.6 L977.6 685.0 L984.7 685.0 L988.6 679.8 L990.2 679.2 L993.3 676.8 L997.3 675.1 L997.3 670.9 L999.6 668.7 L1002.8 667.9 L1009.1 668.7 L1009.1 658.6 L1007.5 657.3 L999.6 652.2 L993.3 648.7 L983.9 647.3 L977.6 649.6 L969.8 649.6 L968.2 647.3 L963.5 642.6 L955.6 643.5 L952.5 640.1 L946.2 636.1 L936.7 635.0 L935.1 640.1 L927.3 640.1 L922.6 643.5 L920.2 641.6 L918.6 634.5 L916.3 629.7 L913.1 629.7 L905.3 632.9 L900.5 629.7 L894.2 630.8 L891.1 629.7 L895.0 626.8 L894.7 615.3 L891.1 610.7 L884.8 608.6 L880.1 602.9 L872.2 612.0 L867.5 614.0 L861.2 616.6 L854.9 619.7 L852.6 623.9 L853.4 627.4 L843.9 629.7 L842.3 635.0 L839.2 636.1 L836.0 636.6 L832.9 635.0 L832.1 641.6 L833.4 647.3 L834.5 653.9 L838.4 654.8 L837.6 658.1 L833.7 664.1 L829.8 663.0 L832.9 658.1 L832.1 653.9 L830.2 649.6 L830.5 642.6 L830.5 633.5 L825.0 632.9 L822.4 641.6 L821.6 647.3 L824.3 655.2 L821.9 653.5 L817.2 650.5 L812.5 648.2 L810.9 652.2 L807.7 653.9 L801.4 655.2 L799.9 653.9 L792.0 657.7 L788.9 655.2 L785.4 653.9 L785.7 663.4 L782.6 662.2 L779.4 669.8 L774.7 672.3 L770.8 669.8 L771.2 664.5 L776.3 664.1 L780.2 662.2 L781.0 658.1 L773.1 651.8 L768.4 650.5 L765.3 645.9 L760.5 642.6 L756.6 642.1 L751.1 645.9 L747.2 647.3 L744.8 649.6 L741.7 653.9 L740.1 656.1 L738.5 660.2 L736.2 664.5 L733.0 669.8 L729.1 674.4 L725.9 676.8 L724.4 680.2 L724.4 683.4 L725.2 688.7 L726.7 690.8 L729.1 690.5 L732.2 688.1 L733.3 687.2 L734.1 688.1 L735.2 692.6 L736.5 696.3 L736.8 698.3 L739.0 698.3 L741.7 696.3 L742.5 692.6 L744.8 688.1 L746.1 685.6 L743.7 682.8 L744.0 677.8 L746.4 674.1 L749.5 669.0 L751.1 665.3 L754.3 664.9 L756.5 666.8 L755.0 668.7 L752.7 671.9 L750.3 675.1 L750.3 680.2 L751.9 685.0 L755.8 684.1 L758.2 683.7 L761.3 683.4 L764.0 685.3 L760.5 686.6 L757.4 686.6 L753.5 687.5 L753.5 689.3 L754.7 693.2 L751.9 692.0 L749.8 694.0 L749.5 698.3 L748.0 699.9 L745.6 700.2 L741.7 701.6 L738.5 702.4 L736.2 701.3 L733.8 702.4 L732.5 700.2 L733.5 698.3 L732.7 696.3 L733.2 692.0 L729.4 694.6 L730.0 699.7 L729.9 703.4 L725.9 704.0 L724.1 705.0 L723.1 707.6 L722.0 709.1 L719.0 710.4 L716.8 713.6 L713.5 713.3 L714.1 715.7 L711.8 715.5 L709.1 716.2 L709.4 717.6 L713.0 719.5 L714.6 722.0 L714.5 725.4 L713.4 727.8 L708.6 727.6 L703.9 727.1 L701.9 728.6 L702.7 730.3 L702.7 733.3 L701.6 737.4 L701.7 741.0Z M706.6 744.9 L705.8 746.8 L703.1 748.3 L701.6 750.1 L701.4 753.3 L700.8 756.0 L698.4 757.4 L696.1 758.3 L693.2 761.3 L692.1 764.8 L690.5 767.4 L689.8 769.9 L691.0 772.4 L691.0 774.9 L690.5 777.9 L689.0 780.3 L689.8 781.8 L690.1 783.9 L691.3 785.0 L692.9 786.3 L693.4 786.9 L695.3 788.7 L695.6 789.8 L696.8 791.9 L698.4 793.0 L701.6 795.0 L704.7 796.8 L709.4 795.5 L711.8 795.8 L713.4 796.1 L714.9 795.8 L718.1 794.4 L719.6 793.8 L723.6 793.8 L724.4 795.0 L725.9 796.9 L727.5 796.6 L729.9 796.6 L731.8 797.4 L731.9 799.8 L731.3 802.1 L730.7 804.5 L731.1 806.1 L734.1 810.0 L735.7 811.9 L736.2 813.2 L737.3 819.2 L737.7 822.7 L736.2 825.1 L735.1 829.7 L735.4 832.5 L737.3 836.7 L739.3 840.0 L740.4 847.8 L742.5 850.5 L743.6 852.3 L745.1 857.3 L745.4 860.6 L746.1 861.4 L748.0 862.2 L752.7 860.6 L756.6 860.6 L759.8 859.5 L761.3 857.8 L764.5 855.0 L766.0 852.3 L767.8 850.9 L768.3 845.9 L768.4 845.0 L772.3 842.6 L772.3 839.2 L771.6 837.5 L772.3 835.0 L774.7 831.7 L779.4 829.2 L780.2 826.8 L780.2 821.1 L778.9 819.5 L778.6 816.6 L778.2 813.9 L778.2 811.6 L779.4 809.2 L781.8 806.4 L784.1 804.5 L785.7 802.1 L788.9 800.6 L790.4 799.0 L792.8 795.8 L794.4 792.7 L796.4 788.7 L796.7 787.1 L797.0 785.0 L795.1 785.5 L792.0 786.0 L788.9 786.8 L786.5 787.2 L784.5 785.3 L783.4 783.6 L781.8 781.8 L781.0 781.0 L778.8 779.0 L778.3 778.2 L777.1 774.9 L775.0 773.2 L775.2 769.9 L773.9 767.4 L772.3 765.0 L770.8 761.8 L769.2 758.7 L767.6 755.5 L767.8 754.4 L767.3 752.0 L765.3 751.4 L762.1 752.5 L759.0 751.4 L755.8 750.9 L753.5 749.6 L750.3 749.0 L748.0 750.5 L748.0 752.4 L746.4 753.6 L744.0 752.7 L741.0 751.4 L740.4 750.0 L736.2 749.0 L734.6 748.7 L734.1 748.1 L732.5 746.4 L733.8 743.9 L733.0 742.3 L733.8 741.0 L732.2 740.4 L729.9 741.2 L726.7 741.0 L721.2 741.4 L718.1 742.0 L714.9 743.3 L713.4 744.7 L708.6 744.3 L707.2 743.3Z M793.3 823.5 L792.0 825.1 L791.2 826.8 L789.6 828.4 L786.5 829.5 L785.7 830.8 L786.2 833.3 L786.0 835.8 L784.6 838.3 L785.1 840.9 L785.7 844.0 L787.3 845.2 L790.6 844.2 L791.7 840.9 L792.8 836.7 L794.4 831.7 L794.8 830.5 L795.9 828.4 L795.1 825.1 L794.0 822.7Z M895.0 839.2 L894.9 842.6 L895.8 847.0 L897.2 852.3 L897.4 856.9 L897.4 860.6 L899.8 862.5 L902.1 862.5 L905.3 860.6 L910.0 860.3 L911.6 858.7 L914.7 857.4 L919.4 856.1 L923.3 856.0 L927.3 858.0 L929.6 862.2 L932.8 862.2 L933.6 858.7 L934.4 862.5 L935.9 863.9 L936.7 868.0 L939.9 869.2 L943.0 869.2 L946.9 870.4 L949.3 868.0 L952.5 867.4 L953.2 863.5 L954.8 858.7 L957.2 855.0 L958.0 849.6 L957.2 844.3 L954.8 842.6 L953.7 840.0 L950.9 837.5 L947.7 834.7 L946.2 832.5 L945.4 827.6 L943.8 826.3 L942.2 825.9 L941.4 821.9 L940.7 820.6 L939.6 823.5 L939.1 825.9 L939.1 830.8 L936.7 832.0 L933.6 830.0 L931.2 828.4 L929.6 826.8 L930.4 824.3 L931.5 823.0 L929.6 822.7 L925.4 821.8 L924.1 822.1 L921.8 823.5 L921.0 824.7 L920.2 827.6 L917.8 827.6 L916.6 825.9 L914.7 825.9 L912.3 829.5 L910.8 830.8 L909.2 830.8 L908.4 833.3 L906.8 835.0 L903.7 835.8 L900.5 837.0 L898.2 837.8 L895.8 838.9Z M944.9 877.1 L945.4 878.3 L947.4 880.1 L949.3 878.8 L949.6 876.6 L949.8 874.3 L946.9 874.5 L944.1 873.9Z M988.6 862.9 L990.8 865.4 L991.0 868.4 L989.9 870.8 L991.8 872.5 L991.1 875.2 L992.1 875.8 L994.1 873.3 L994.9 871.0 L996.3 870.8 L997.3 867.8 L994.1 868.0 L992.6 866.4 L990.2 863.5 L988.2 861.4Z M987.1 874.1 L986.3 876.2 L984.7 878.8 L981.2 880.9 L978.9 883.1 L978.4 885.4 L980.0 886.1 L982.3 886.7 L984.7 884.9 L985.5 882.0 L986.3 880.9 L988.6 880.3 L989.4 878.3 L990.7 876.0 L988.2 873.5Z M922.4 746.8 L924.1 747.1 L926.5 746.4 L928.9 745.6 L929.6 747.7 L931.8 746.2 L934.4 745.4 L936.4 744.9 L938.0 743.5 L938.1 741.0 L938.3 738.6 L939.7 736.0 L939.1 733.9 L938.9 732.0 L936.7 733.3 L936.7 736.0 L936.4 738.0 L934.4 740.0 L932.5 741.4 L931.5 740.6 L930.4 742.9 L930.3 743.5 L927.3 743.7 L925.7 743.7 L923.5 745.2 L922.6 745.8Z M921.3 749.6 L921.3 752.0 L922.6 751.8 L923.3 750.5 L924.0 747.7 L921.8 747.0 L920.4 747.9Z M924.6 748.1 L926.5 748.1 L928.4 747.1 L927.8 746.2 L925.4 746.6Z M936.7 731.8 L938.6 731.2 L939.1 729.5 L941.9 730.8 L943.8 728.9 L945.8 728.0 L944.6 725.8 L942.2 726.0 L939.7 723.1 L939.2 725.4 L939.1 728.2 L937.2 728.0 L936.6 729.5Z M940.2 722.0 L942.2 720.9 L941.4 717.4 L942.2 713.8 L941.4 710.1 L941.9 705.0 L941.4 702.4 L940.7 701.6 L940.3 704.2 L939.9 708.9 L940.2 713.8 L939.6 717.4 L939.6 720.7Z M707.5 712.6 L710.2 711.9 L713.4 711.1 L716.5 710.6 L718.7 709.6 L719.2 705.8 L717.3 705.0 L716.5 703.7 L715.7 701.6 L714.1 699.4 L713.4 697.5 L712.4 696.0 L713.7 692.6 L711.0 692.0 L711.8 689.3 L708.6 689.3 L707.8 691.7 L707.4 694.0 L706.7 694.9 L707.8 698.8 L709.1 699.9 L711.8 700.2 L711.5 704.0 L709.4 704.2 L709.4 705.5 L709.9 706.8 L708.3 708.4 L711.0 708.9 L711.8 709.6 L709.4 709.9Z M707.1 707.1 L706.7 704.5 L707.1 702.6 L707.5 700.2 L706.3 699.1 L704.7 698.8 L703.1 700.2 L700.8 701.8 L701.1 704.0 L701.6 706.3 L700.3 708.1 L701.6 708.9 L703.1 708.6 L705.5 707.4Z M678.7 668.3 L681.9 669.8 L680.8 672.3 L683.5 672.3 L687.1 673.7 L690.5 672.3 L693.7 670.1 L695.3 667.2 L693.7 664.9 L692.9 662.2 L689.8 663.4 L685.0 663.7 L681.1 663.0 L678.7 666.0Z M842.0 791.9 L842.5 793.9 L843.3 794.4 L844.7 793.8 L845.3 792.2 L844.4 790.3 L843.1 788.7 L842.0 788.2Z M867.5 796.6 L869.6 798.5 L871.4 800.6 L872.5 803.2 L873.8 805.3 L875.4 807.6 L876.9 810.0 L878.5 811.6 L880.9 813.0 L882.9 812.8 L883.2 810.8 L883.2 808.4 L880.9 806.1 L879.3 804.5 L876.2 801.3 L874.6 800.6 L871.4 797.4 L869.9 795.5 L866.4 794.9Z M882.5 814.7 L884.0 815.4 L886.4 816.0 L889.5 816.5 L892.7 816.8 L896.5 817.4 L896.6 815.8 L893.5 814.6 L890.3 814.4 L886.4 813.5 L883.2 813.2 L882.0 814.4Z M897.4 817.6 L900.5 817.9 L905.3 819.5 L910.8 820.0 L913.1 818.7 L916.3 816.8 L913.1 816.6 L908.4 817.0 L903.7 817.1 L899.8 816.8 L897.4 816.6Z M888.0 801.3 L888.0 803.7 L888.7 805.3 L889.8 808.3 L891.9 808.4 L894.2 808.7 L896.6 810.0 L899.0 809.5 L899.8 808.4 L899.6 806.1 L901.3 804.8 L901.3 802.9 L903.4 802.1 L901.8 800.6 L901.8 796.6 L902.9 795.8 L904.0 795.4 L902.1 794.2 L900.5 792.7 L899.0 793.5 L898.2 795.4 L897.4 795.8 L895.8 796.6 L894.2 798.7 L891.9 799.8 L891.1 800.9 L889.5 801.0Z M906.0 812.5 L906.0 808.4 L906.8 808.4 L907.6 811.3 L909.7 812.4 L909.2 810.8 L907.6 807.6 L908.4 806.8 L910.6 805.1 L909.2 805.0 L906.8 805.6 L905.7 804.5 L906.2 803.2 L907.9 802.9 L912.3 802.9 L912.8 801.3 L910.0 802.3 L907.6 802.0 L905.6 802.4 L904.8 803.4 L904.2 805.3 L903.4 808.1 L904.3 809.2 L904.5 812.4Z M923.3 806.8 L925.4 807.3 L923.8 808.1 L924.9 809.2 L926.5 810.0 L929.6 810.8 L932.0 811.4 L934.4 814.4 L933.3 815.2 L933.6 817.0 L935.9 816.6 L938.3 818.2 L940.8 818.4 L942.2 816.8 L943.3 816.0 L946.2 817.6 L948.5 819.7 L952.5 820.6 L952.5 820.0 L950.1 817.9 L948.5 816.0 L949.3 813.9 L948.5 813.2 L946.2 812.0 L945.4 810.3 L941.4 808.7 L938.3 807.8 L935.1 807.2 L932.8 806.1 L929.6 808.9 L928.1 807.6 L927.3 805.1 L924.9 804.3 L922.6 805.7Z M905.7 777.4 L904.9 778.2 L906.0 780.2 L906.2 781.0 L907.6 781.8 L910.0 783.1 L911.7 783.7 L910.8 781.8 L908.4 781.1 L907.6 778.7 L908.9 776.6 L908.7 774.1 L906.5 773.9 L905.3 774.1Z M909.2 791.9 L910.8 791.6 L912.3 793.9 L913.9 794.7 L914.7 793.8 L915.5 792.2 L913.9 788.2 L912.0 790.3 L910.0 791.1 L908.4 792.7Z M908.4 785.0 L910.8 787.1 L911.6 785.5 L913.9 785.8 L913.1 783.9 L911.6 784.2 L909.7 785.5Z M906.5 768.2 L907.6 765.7 L908.2 763.1 L906.8 762.7 L906.0 763.9 L905.4 766.5Z M887.5 774.1 L888.9 774.6 L890.3 774.1 L891.1 772.2 L890.3 771.4 L887.3 772.9Z M733.8 596.8 L738.5 605.8 L741.7 611.4 L744.8 605.8 L749.5 604.4 L751.1 596.8 L759.0 584.1 L751.1 580.4 L744.8 579.5 L738.5 585.9 L733.8 586.8Z M798.3 640.1 L803.0 643.5 L806.9 644.0 L803.8 635.0 L806.2 626.8 L810.9 617.9 L815.6 614.7 L824.3 608.6 L820.3 607.9 L812.5 612.0 L806.2 617.9 L803.0 625.1 L800.7 632.4Z M869.1 596.0 L875.4 596.8 L880.1 588.5 L873.8 577.5 L867.5 579.5 L862.8 588.5Z M933.6 623.9 L939.9 626.8 L944.6 619.7 L941.4 617.9 L936.7 616.0 L931.2 617.9Z M1000.4 643.5 L1002.8 640.1 L997.3 640.1Z M433.4 668.7 L436.5 666.0 L441.2 667.9 L445.2 670.1 L447.5 666.0 L449.6 663.7 L445.9 660.2 L441.2 657.3 L433.4 652.2Z M433.4 643.1 L436.5 643.1 L438.1 641.1 L433.4 640.1Z M453.8 702.9 L452.2 704.2 L455.4 703.7Z M445.9 706.1 L442.0 707.4 L444.4 706.8Z M438.1 707.6 L436.5 708.4 L439.7 708.1Z M448.3 675.1 L450.7 674.1 L446.7 672.6Z M795.1 585.0 L807.7 584.1 L814.0 576.6 L803.0 574.6 L790.4 579.5Z M948.5 725.4 L952.5 722.0 L949.3 723.8 L946.2 726.5Z M729.7 734.9 L729.9 737.2 L731.4 736.6 L731.9 734.9 L731.6 732.7 L729.4 732.9Z M730.2 731.2 L731.0 732.0 L731.4 730.8 L731.3 728.6 L730.0 728.9Z M736.2 739.8 L739.0 741.6 L740.4 741.0 L741.0 738.4 L736.0 738.8Z M753.6 744.5 L756.6 744.9 L757.9 744.3 L753.5 743.9Z M767.6 745.4 L769.7 745.6 L770.9 743.5 L767.3 744.9Z M733.8 698.6 L735.7 699.7 L736.3 696.9 L733.6 696.9Z M745.9 694.0 L746.4 692.3 L745.1 691.4Z M593.5 763.1 L594.6 763.1 L595.4 760.4 L594.1 759.9Z M621.3 899.8 L624.5 899.8 L625.3 897.8 L620.1 898.0Z M471.1 772.4 L471.9 773.2 L472.7 771.9 L471.1 771.2Z M995.4 832.5 L996.8 832.8 L997.4 831.7 L995.7 831.3Z M964.2 816.3 L968.2 818.7 L971.3 820.3 L969.8 818.7 L966.6 816.3 L962.7 814.7Z M976.0 838.0 L979.2 839.7 L977.6 837.5 L974.5 835.8Z M950.1 813.2 L952.5 813.6 L955.3 812.4 L955.6 810.3 L953.2 811.9 L950.1 812.4Z M980.1 830.5 L981.6 832.0 L980.4 830.0 L979.5 828.4 L978.6 827.6Z M917.1 803.2 L917.8 804.5 L918.6 802.1 L917.1 801.3Z M918.6 809.5 L922.2 809.7 L921.8 808.4 L917.8 808.4Z M913.1 819.4 L916.7 817.0 L911.6 818.4Z" fill="#F5F5F5" stroke="#D6D6D6" stroke-width="0.8" stroke-linejoin="round"/><path d="M791.2 728.6 L792.8 731.2 L794.4 733.9 L794.2 734.5 L793.6 738.4 L795.1 740.2 L797.5 741.4 L800.7 740.4 L801.1 738.6 L799.9 736.0 L801.3 733.5 L799.9 730.8 L799.1 729.7 L797.5 727.6 L797.5 725.1 L799.9 723.1 L796.7 719.7 L793.6 721.3 L791.2 722.7 L790.4 725.4Z M762.1 732.5 L765.3 732.5 L768.4 731.0 L770.8 730.8 L773.1 731.4 L776.3 732.9 L779.4 732.9 L781.8 731.8 L781.8 730.8 L778.6 726.0 L776.0 724.3 L776.3 721.6 L778.3 719.7 L777.1 719.7 L774.4 722.2 L771.9 723.1 L773.9 723.6 L771.6 724.7 L769.2 725.4 L767.6 723.4 L768.4 722.0 L766.2 720.7 L764.5 720.7 L763.2 723.6 L761.8 725.4 L761.0 727.6 L760.2 729.7 L760.5 731.8Z M576.5 720.2 L580.4 721.1 L583.3 719.7 L580.4 715.7 L577.3 715.5 L571.8 720.4Z M578.4 730.8 L580.8 729.7 L581.2 724.3 L582.8 722.5 L579.3 722.7 L578.1 725.4Z M586.7 728.6 L588.0 725.4 L590.3 724.3 L588.3 722.0 L584.4 722.0 L585.2 725.4Z M588.3 731.8 L591.8 729.7 L592.2 729.1 L585.5 731.4Z M591.0 728.2 L596.5 727.8 L596.2 726.0 L591.9 727.1Z M562.7 711.4 L564.7 711.4 L563.4 703.7 L560.8 704.2Z M525.4 668.7 L530.9 667.2 L528.5 660.2 L521.4 663.4Z M538.8 681.8 L544.3 675.8 L539.5 676.8 L532.5 681.2Z M766.8 807.6 L769.2 807.6 L770.5 805.3 L769.7 803.2 L766.5 804.2Z M762.9 813.9 L764.6 816.8 L765.6 817.1 L765.3 813.9 L763.2 809.2 L762.4 808.9Z M770.3 821.9 L771.1 825.9 L772.0 826.6 L770.9 820.3 L770.0 818.7Z" fill="#fff" stroke="#D6D6D6" stroke-width="0.8"/><path d="M494.7 649.1 L494.7 684.1 L500.2 688.1 L504.1 685.9 L507.3 690.2 L510.4 696.9 L511.5 700.5 M522.5 715.0 L566.8 715.0 L567.1 714.1 L575.7 717.4 L583.3 720.9 L586.7 723.6 L586.7 729.7 L592.2 728.9 L591.4 728.0 L597.0 726.2 L599.0 724.3 L604.0 724.3 L605.3 723.4 L607.6 718.8 L609.2 719.0 L609.9 722.7 L611.1 724.7 M532.3 749.6 L535.9 749.6 L541.9 751.8 L546.3 751.8 L549.0 750.9 L552.1 754.9 L554.5 756.0 L556.8 754.6 L560.0 758.7 L563.6 761.5 M571.5 780.6 L571.8 775.2 L573.4 775.2 L576.2 775.2 L577.6 774.1 M576.2 775.2 L576.2 778.4 L577.8 778.7 M575.7 781.1 L577.3 781.6 L578.9 783.1 L582.8 781.5 L585.6 780.0 M581.7 786.0 L584.8 786.3 M585.9 790.3 L586.1 788.5 M594.0 792.3 L594.9 790.0 M604.3 784.7 L602.5 786.3 L602.0 789.3 L603.2 792.7 L606.4 792.7 L610.3 793.9 L609.9 797.1 L610.6 799.8 L611.3 801.8 M611.3 801.8 L615.0 797.7 L617.7 797.4 L620.5 796.6 L621.3 795.5 L621.0 793.5 L622.4 790.6 M620.5 796.6 L624.5 801.3 L627.6 800.6 L630.0 800.1 L631.6 800.1 L635.2 797.2 M626.8 794.2 L625.3 797.4 L627.6 800.6 M630.0 794.2 L631.6 796.6 L631.6 800.1 M606.5 810.3 L605.6 804.0 L607.2 802.4 L606.7 801.0 L610.6 799.8 M606.5 810.3 L602.0 811.6 L600.1 815.5 L601.7 818.7 L602.9 819.5 L605.6 821.1 L607.0 821.1 M607.0 821.1 L608.7 823.5 L607.3 828.4 L608.0 830.0 L607.2 831.7 L605.8 833.0 M607.2 831.7 L608.7 835.0 L609.5 839.2 L610.8 840.6 L609.1 843.5 L608.7 847.8 L606.4 853.2 L606.4 858.7 L605.6 862.5 L604.8 868.4 L604.0 874.5 L603.6 880.9 L603.2 887.7 L601.7 894.8 L604.0 899.8 L608.0 900.3 M607.0 821.1 L612.7 819.5 L613.8 820.8 L614.3 823.5 L620.5 825.1 L621.6 828.4 L624.6 829.5 L625.3 835.5 L625.0 836.0 L622.9 835.0 L618.2 836.7 L617.9 839.5 L615.4 840.6 L612.7 838.9 L610.8 840.6 M625.0 836.0 L625.6 839.2 L628.9 840.0 L630.0 842.6 L631.1 845.4 L628.9 848.4 L625.3 848.4 L624.3 848.0 L622.1 842.6 L617.9 839.5 M631.1 845.4 L631.9 848.7 L628.4 850.5 L625.9 853.6 L630.0 855.0 L632.7 858.0 L632.3 860.6 M625.9 853.6 L624.6 859.7 L624.5 861.6 M598.2 803.9 L594.6 802.4 L592.5 801.5 M598.2 803.9 L593.8 808.4 L592.2 811.6 L590.2 809.1 M713.7 728.0 L717.6 729.1 L721.5 729.9 M705.5 730.8 L703.6 730.6 L706.3 731.6 L705.5 735.6 L704.7 740.6 M720.4 710.1 L723.3 712.9 L725.6 713.8 L729.4 715.3 L728.5 718.3 L727.2 719.0 L725.9 721.6 L727.5 722.2 L727.2 726.0 L728.3 726.9 M723.3 709.1 L725.8 710.6 L725.9 708.1 L727.5 707.1 L727.8 704.2 M725.9 712.4 L726.1 713.8 M728.5 718.3 L731.4 718.6 L733.0 720.0 L735.7 719.5 L736.9 718.6 L736.6 716.9 L738.2 715.5 L740.1 715.3 L743.2 716.0 M725.9 721.6 L727.5 722.2 L729.9 721.6 L731.4 721.1 L733.0 720.0 M735.7 719.5 L738.1 720.9 L741.7 720.9 L743.2 717.4 M731.4 700.2 L733.8 702.4 M738.8 702.6 L739.5 706.3 L739.8 710.1 L740.1 710.6 L735.5 711.9 L738.2 715.5 M739.8 710.1 L743.2 711.9 L746.1 713.8 L748.7 714.1 L751.9 714.5 L754.3 711.4 L753.6 708.9 L753.9 705.0 L753.5 702.6 L751.9 701.3 L747.2 701.3 M743.2 716.0 L746.1 713.8 M743.2 717.4 L745.6 718.1 L748.7 716.2 L751.9 716.7 L751.9 714.5 M741.7 720.9 L744.0 722.5 L746.4 722.2 L748.4 721.6 L751.1 718.3 L751.9 716.7 M751.1 718.3 L755.0 717.6 L758.3 716.9 L760.9 720.2 L760.9 723.1 L763.2 723.6 M751.9 716.7 L752.2 717.6 M737.9 723.1 L740.1 723.1 L741.7 720.9 M740.1 723.1 L744.0 724.0 L746.4 724.5 L747.0 727.6 L745.6 729.9 M746.4 724.5 L750.3 725.4 L752.0 726.0 L755.8 727.1 L759.8 726.5 L761.5 727.1 M746.4 722.2 L750.3 725.4 M752.0 726.0 L751.9 730.1 L749.5 730.1 L748.0 729.1 L747.0 727.6 M748.0 729.1 L748.7 731.0 L749.5 733.7 L748.3 735.8 M749.5 733.7 L752.7 732.2 L757.7 731.4 L760.5 730.8 M751.9 730.1 L752.7 732.2 M757.7 731.4 L758.2 733.3 M753.5 702.6 L756.6 701.6 L758.2 697.7 L760.9 696.6 L760.1 693.2 L759.8 691.1 L760.9 686.6 M749.5 696.9 L752.7 696.0 L755.8 696.3 L758.2 697.7 M751.1 692.3 L755.0 691.7 L756.6 692.3 L759.8 691.1 M753.9 705.0 L756.9 707.6 L759.0 708.6 L764.5 709.1 L766.5 707.4 L768.1 707.1 M754.3 711.4 L753.6 708.9 M758.3 716.9 L761.3 716.2 L762.9 717.4 L763.7 720.7 L764.5 720.7 M760.9 696.6 L764.5 697.5 L765.3 702.4 L767.9 704.2 L766.5 707.4 M768.1 707.1 L770.3 709.4 L772.3 711.6 L774.7 711.6 L776.7 712.9 L779.4 713.6 L779.1 716.2 L777.1 718.1 L776.7 719.5 M760.9 686.6 L763.7 682.5 L762.9 680.2 L766.0 675.8 L763.7 672.3 L764.5 667.9 L762.9 664.1 L763.7 657.3 L761.6 652.2 L757.4 648.7 L755.8 653.5 L753.5 653.1 L749.5 651.3 M749.5 651.3 L753.9 656.1 L753.5 662.2 L754.3 664.9 M749.5 651.3 L745.6 653.9 L744.0 656.9 L741.7 660.2 L739.3 666.0 L737.7 669.8 L736.2 673.4 L735.4 679.5 L736.6 681.8 L735.7 685.3 L734.4 688.1 L734.1 688.1 M773.1 741.6 L774.2 741.4 L776.3 741.4 L779.4 740.8 L783.4 740.8 L786.0 740.4 L786.5 738.0 L785.9 736.2 L787.0 735.6 M758.2 733.3 L757.4 731.6 L760.5 730.8 M781.8 731.8 L784.9 732.7 L788.9 732.5 L789.8 731.2 L786.5 729.3 L782.6 727.6 L779.4 727.8 M784.9 732.7 L787.0 735.6 L789.6 737.2 L792.0 738.2 L793.6 738.4 M789.8 731.2 L792.8 731.2 M786.5 729.3 L790.4 729.7 L791.2 728.6 M773.0 743.1 L773.9 745.8 L773.1 748.1 L772.3 748.5 M773.1 748.1 L777.5 747.9 L781.0 746.0 L781.5 740.8 M771.6 748.7 L772.3 749.6 L772.3 752.4 L771.6 755.1 M777.5 747.9 L777.8 750.5 L774.7 751.4 L776.3 753.3 L773.9 755.1 L771.4 755.1 M777.8 750.5 L782.6 752.2 L786.8 755.6 L789.6 755.8 L792.0 755.1 M781.0 746.0 L783.0 748.3 L785.7 750.7 M789.6 755.8 L785.7 756.9 L777.8 756.0 M787.0 735.6 L788.1 738.0 L790.4 741.0 L791.7 744.5 L788.9 748.7 L791.7 751.4 L792.0 754.0 M803.8 767.0 L797.5 764.1 M803.8 767.0 L803.0 771.6 L798.3 773.2 L798.6 778.9 M784.6 783.6 L787.3 778.2 L790.4 776.6 L798.3 773.2 M801.1 740.4 L804.6 739.0 L806.5 738.4 L810.1 740.6 L812.5 741.8 L812.8 743.7 L811.7 747.7 L812.1 751.4 L813.6 751.8 L812.3 754.6 L814.8 755.3 L816.1 759.0 L814.3 760.4 L813.2 762.7 M801.1 740.4 L801.3 733.5 M801.3 733.5 L804.6 732.2 L806.2 732.2 L808.5 729.3 L810.9 730.3 L812.5 732.5 L814.0 734.9 L817.2 737.0 L820.3 739.0 L821.1 740.2 L823.5 741.0 L826.6 740.0 L829.0 741.0 L834.3 740.6 M812.8 743.7 L814.8 744.1 L818.0 742.3 L821.1 740.2 M814.8 755.3 L817.8 755.1 L820.8 755.8 L823.0 755.1 L825.0 752.4 L827.4 748.1 L828.3 746.0 L829.1 742.9 L832.4 741.4 L834.3 740.6 M834.3 740.6 L835.3 743.9 L837.6 743.9 L839.2 745.8 L840.8 748.7 L840.0 749.6 L841.6 752.7 L844.1 754.2 L847.1 755.5 L850.2 757.3 L854.9 758.1 L856.2 759.4 L861.2 759.9 L864.4 758.7 L869.1 757.4 L871.0 758.7 L869.9 763.9 L871.8 764.6 L873.0 767.9 L875.7 769.2 L876.9 767.4 L879.3 767.2 L882.1 766.0 L884.5 766.8 L886.4 769.1 M834.3 740.6 L832.3 736.2 L834.5 734.1 L837.6 732.9 L840.0 731.6 L842.8 730.6 L843.1 724.3 L846.3 723.1 L847.1 719.3 L851.0 719.7 L853.8 714.8 M799.9 730.8 L803.8 724.3 L808.5 722.9 L812.5 725.8 L814.0 727.6 L818.6 727.1 L820.3 728.9 L821.1 732.5 L823.5 732.9 L825.0 732.0 L827.7 730.8 L829.0 728.9 L832.1 729.7 L833.7 728.0 L839.2 729.1 L842.8 730.6 M827.7 730.8 L827.4 732.9 L829.8 732.9 L831.3 734.9 L827.4 735.3 L825.0 734.7 L824.3 738.0 L823.1 740.6 M790.4 717.4 L792.0 718.6 L794.4 720.9 L795.9 716.2 L797.5 711.4 L803.0 710.9 L805.4 710.1 L808.5 710.1 L813.2 710.1 L810.9 707.6 L812.5 703.7 L813.2 702.4 L818.7 701.0 L824.3 698.8 L827.4 699.1 L831.3 702.4 L835.3 703.7 L837.3 702.4 L840.0 706.3 L842.3 710.6 L847.1 710.1 L850.2 712.9 L853.8 714.8 M853.8 714.8 L858.1 711.4 L861.5 710.6 L865.1 712.6 L869.6 713.1 L870.7 708.9 L873.8 708.4 L877.4 711.4 L880.1 712.1 L884.0 711.6 L886.4 713.8 L890.3 714.5 L895.8 712.1 L899.9 712.9 L901.3 713.6 L903.7 712.6 L904.9 708.9 L906.8 704.2 L913.1 705.0 L916.3 711.4 L919.4 714.1 L922.6 717.9 L926.5 716.9 L928.9 716.5 L927.3 719.7 L926.0 724.3 L922.6 724.7 L922.6 729.1 L922.1 730.1 M853.8 714.8 L856.5 717.4 L859.6 720.2 L859.2 723.1 L863.6 724.5 L866.7 726.0 L869.1 729.3 L873.8 729.7 L881.7 731.4 L884.8 729.7 L890.3 729.5 L892.5 727.1 L893.5 724.3 L896.6 723.4 L899.0 720.4 L902.1 720.2 L904.9 719.5 L901.3 718.1 L899.9 712.9 M922.1 730.1 L920.2 729.7 L917.8 730.8 L914.7 733.1 L912.3 735.3 M913.1 737.4 L916.3 738.4 L918.3 737.8 M854.9 758.1 L855.2 760.4 L857.3 761.3 L861.2 761.8 L862.0 767.0 L861.5 769.6 M855.2 760.4 L850.2 760.4 L845.5 758.7 L843.1 756.4 L844.1 754.2 M861.2 759.9 L858.1 759.9 L857.3 761.3 M869.9 763.9 L865.1 764.4 L863.6 768.2 L862.2 769.6 M871.8 764.6 L870.7 768.2 L874.1 770.7 L874.4 772.2 L871.4 775.7 L871.4 779.0 L871.6 785.5 M875.7 769.2 L874.1 770.7 L875.4 774.1 L876.9 774.9 L880.9 775.7 L882.5 779.0 L882.9 781.5 L878.5 781.1 L877.7 784.4 M882.5 779.0 L885.6 780.6 L883.2 786.3 L881.7 787.9 M876.9 767.4 L876.9 769.9 L880.1 772.4 L882.5 773.9 L884.0 775.7 M874.6 793.9 L875.7 794.9 M888.9 800.6 L891.9 802.1 L894.2 801.8 L896.6 800.9 L898.2 798.2 L898.2 797.1 L901.8 796.9 M938.3 807.8 L938.3 818.2 M913.0 818.2 L913.3 818.9 M714.6 750.5 L711.8 751.8 L708.6 754.4 L702.8 756.5 L702.8 759.0 M714.6 750.5 L713.7 745.8 L713.4 744.7 M702.8 759.0 L702.8 761.5 L697.6 761.5 L697.6 765.7 L693.2 769.4 L689.8 769.4 M702.8 759.0 L708.9 763.1 L718.4 770.2 L721.5 773.2 L723.3 773.1 L725.6 772.4 L728.3 770.2 L735.4 765.7 L738.5 767.2 L740.1 766.5 M702.8 761.5 L697.6 765.7 M697.6 761.5 L707.1 763.9 L707.8 777.4 L697.6 780.2 L696.8 780.0 L698.4 784.0 L694.5 783.9 M707.8 777.4 L710.2 779.8 L713.4 780.0 L715.7 779.3 L717.3 780.6 L720.4 784.2 L722.2 785.2 L722.8 782.3 L725.9 782.1 L729.1 783.2 L737.7 781.9 L739.3 783.1 L740.1 780.6 L741.0 771.7 L740.1 766.5 M740.1 766.5 L746.4 769.1 L754.3 772.4 L754.3 771.6 L755.8 768.2 L755.8 751.1 M734.6 748.7 L732.7 752.7 L732.1 758.7 L735.4 765.7 M729.6 741.2 L729.1 748.7 L731.4 753.6 L732.1 758.7 M755.8 768.2 L774.4 768.2 M754.3 772.4 L754.3 778.7 L751.9 782.3 L751.1 783.6 L752.7 786.3 L754.3 790.1 L756.1 787.2 L759.0 788.5 L760.5 788.7 L763.7 788.2 L767.6 784.4 L770.0 788.7 L770.3 790.3 L768.4 791.4 L771.6 795.4 L770.0 797.1 L769.2 797.7 L765.6 797.7 L764.9 798.2 L762.9 796.6 L760.5 795.8 L759.4 795.5 L755.8 796.3 L751.9 797.1 L748.7 796.6 L745.8 798.0 L742.5 798.5 L740.9 795.0 L739.3 793.9 L740.9 791.9 L738.5 788.5 L740.9 787.9 L739.2 783.9 L739.3 783.1 M751.1 783.6 L750.3 786.3 L746.1 789.5 L742.5 791.7 L740.9 791.9 M770.0 788.7 L773.1 781.0 L773.9 780.8 L774.7 775.7 L777.1 774.9 M773.9 780.8 L776.3 780.3 L779.4 780.6 L781.8 781.8 L783.4 783.9 L782.6 786.3 L784.5 785.3 M782.6 786.3 L785.7 789.5 L790.4 791.1 L792.0 796.6 M790.4 791.1 L792.0 791.1 L793.4 788.7 L794.4 785.8 M771.6 795.4 L775.5 797.1 L777.8 798.2 L781.0 797.4 L782.6 797.1 L785.4 795.8 L787.3 795.8 L790.4 791.1 M781.0 797.4 L781.0 806.2 M770.0 797.1 L770.8 801.8 L769.7 803.9 L769.8 805.3 L775.8 809.2 L778.2 811.1 M769.8 805.3 L764.9 805.3 L763.1 805.9 L763.7 807.5 L762.1 808.1 L762.6 808.9 L764.5 809.1 M765.6 797.7 L765.1 800.9 L763.5 802.1 L763.1 805.9 M764.9 805.3 L764.5 809.1 L762.4 813.2 L764.5 816.6 L768.3 818.6 L770.0 818.7 M764.5 816.6 L761.3 817.1 L761.3 821.1 L762.1 823.2 L763.7 824.7 L759.8 822.7 L757.4 821.1 L754.3 821.1 L751.1 818.7 L749.5 814.7 L744.0 816.3 L741.7 813.2 L735.7 813.0 M762.1 823.2 L768.4 825.9 L767.6 818.7 M763.7 824.7 L763.7 828.5 L762.0 828.9 L759.0 832.2 L755.8 831.7 L753.5 832.2 L751.1 829.5 L751.1 824.3 L754.3 824.3 L754.3 821.1 M751.1 829.5 L748.0 830.7 L745.6 831.5 L735.4 831.2 M772.0 826.6 L771.6 830.5 L768.3 830.4 L767.6 837.5 L766.0 840.0 L766.8 847.5 L768.3 847.7 M768.4 825.9 L772.0 826.6 M763.7 828.5 L768.3 830.4 M755.8 831.7 L757.4 833.3 L759.8 836.7 L762.1 839.5 L766.0 840.0 M748.0 832.2 L748.0 839.2 L748.0 844.0 L748.0 850.5 L743.2 850.5 M748.0 839.2 L750.3 845.2 L756.6 845.7 L759.8 841.7 L762.1 839.5 M760.5 851.0 L762.9 852.5 L762.1 854.3 L759.8 853.6 L759.0 852.3 M735.7 813.0 L736.2 811.6 M742.5 798.5 L741.7 800.9 L739.3 800.2 L737.3 800.1 L734.3 800.1 L731.9 799.8 M734.3 800.1 L734.3 802.1 L731.3 802.1 M737.3 800.1 L739.3 803.7 L737.7 807.3 L734.6 807.6 L734.1 810.0 M742.5 798.5 L744.8 800.6 L745.6 805.3 L744.0 808.4 L741.7 810.8 L741.7 813.2 M729.9 796.6 L730.7 793.5 L735.1 792.7 L736.9 789.5 L737.7 786.3 L739.3 783.9 M722.2 785.2 L721.5 788.0 L720.7 792.7 L720.4 793.8 M720.7 792.7 L718.1 792.8 L717.8 786.3 L716.5 786.1 L715.7 786.3 L711.9 786.3 L711.8 788.0 L712.6 790.8 L711.8 795.8 M717.3 780.6 L718.9 782.7 L720.4 784.2 M711.9 786.3 L707.8 787.2 L703.9 787.6 L703.1 791.7 L704.7 796.8 M707.8 787.2 L707.8 785.5 L709.4 783.4 L713.4 780.0 M703.9 787.6 L699.2 784.4 L696.8 784.0 L695.3 783.7 M703.1 791.7 L700.3 790.3 L698.4 793.0 M700.3 790.3 L699.5 788.7 L695.6 789.3 M695.3 783.7 L692.9 783.9 L690.1 783.9 M690.1 782.3 L693.7 782.6 L692.1 781.8 L690.4 782.1 M764.5 667.9 L766.0 675.8 M776.7 719.5 L779.4 719.0" fill="none" stroke="#D6D6D6" stroke-width="0.8" stroke-linejoin="round"/></svg><!--MAPEND-->
<div class="t link" style="left:423px;top:989.4px">See Full Report</div>
<div class="t link" style="left:1426px;top:265.9px">See Full Report</div>
<div class="t ctitle" style="left:1426px;top:364.2px">Sales breakdown by</div>
<div class="div" style="left:1388px;top:406px;width:471px"></div>
<div class="abs" style="left:1426px;top:431px;width:93px;height:30px;border-radius:15px;background:#DCE6FA"></div>
<div class="t" style="left:1442px;top:436.8px;font-size:18px;color:#2A3140;letter-spacing:.3px">coupon</div>
<div class="t" style="left:1515px;top:572.8px;font-size:18px;color:#131720;letter-spacing:.3px">No data in this time period</div>
<div class="t ctitle" style="left:1426px;top:775.2px">New vs returning customers</div>
<div class="div" style="left:1388px;top:817px;width:471px"></div>
<svg class="abs" style="left:1421px;top:867px" width="200" height="200" viewBox="0 0 200 200"><circle cx="100" cy="100" r="83.7" stroke="#3F81DE" stroke-width="15.4" fill="none"/></svg>
<div class="t" style="left:1421px;width:200px;text-align:center;top:942.5px;font-size:16px;color:#353B49">Customers</div>
<div class="t" style="left:1421px;width:200px;text-align:center;top:970.5px;font-size:23px;color:#232836">1</div>
<div class="abs" style="left:1641.5px;top:918px;width:11px;height:11px;border-radius:50%;background:#3F81DE"></div>
<div class="t" style="left:1659px;top:915.9px;font-size:15.5px;color:#353B49">New</div>
<div class="t" style="left:1659px;top:938.9px;font-size:15.5px;color:#4A5060"><b style="color:#272C39">100%</b><span style="display:inline-block;width:7px;height:3.5px"></span><span style="display:inline-block;width:4px;height:4px;border-radius:50%;background:#353B49;vertical-align:4px"></span><span style="display:inline-block;width:9px"></span>1</div>
<div class="abs" style="left:1641.5px;top:974.5px;width:11px;height:11px;border-radius:50%;background:#5BAFE3"></div>
<div class="t" style="left:1659px;top:973.1px;font-size:15.5px;color:#353B49;letter-spacing:.3px">Returning</div>
<div class="t" style="left:1659px;top:994.9px;font-size:15.5px;color:#4A5060"><b style="color:#272C39">0%</b><span style="display:inline-block;width:7px"></span><span style="display:inline-block;width:4px;height:4px;border-radius:50%;background:#353B49;vertical-align:4px"></span><span style="display:inline-block;width:9px"></span>0</div>
<div class="t link" style="left:1426px;top:1097.6px">See Full Report</div>
</div></div>
</body></html>
